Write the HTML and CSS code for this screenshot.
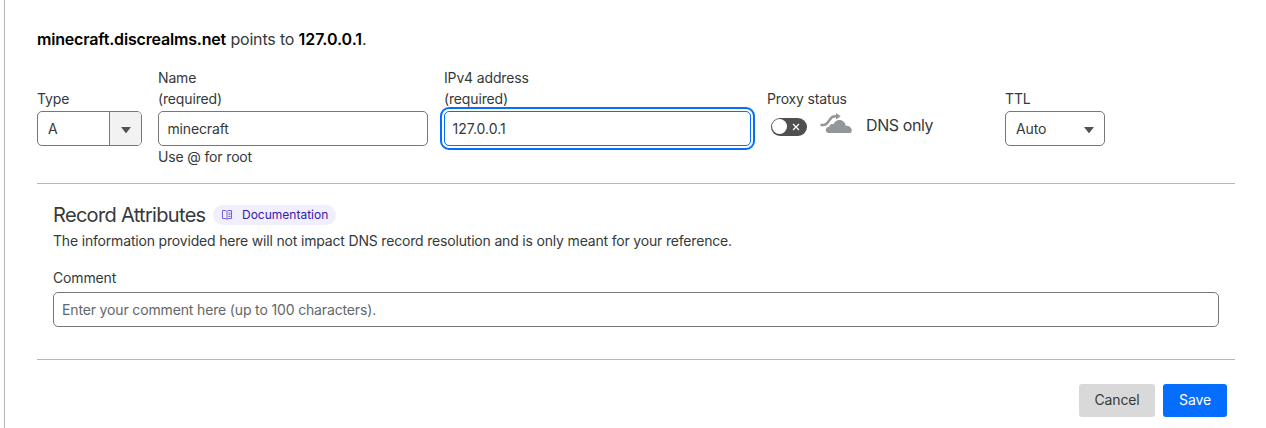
FILE: index.html
```html
<!DOCTYPE html>
<html lang="en">
<head>
<meta charset="utf-8">
<title>DNS record</title>
<link rel="stylesheet" href="styles.css">
</head>
<body>
<main class="panel">
  <p class="summary"><strong class="host">minecraft.discrealms.net</strong><span class="points"> points to </span><strong class="ip">127.0.0.1</strong>.</p>
  <section class="fields">
    <div class="field">
      <div class="label">Type</div>
      <div class="control type-select"><span class="type-value">A</span><span class="type-arrow"><svg class="caret" viewBox="0 0 10 6"><path d="M.6 0h8.8q.6 0 .2.6L5.5 5.700q-.5.5-1 0L.4.6Q0 0 .6 0Z"/></svg></span></div>
    </div>
    <div class="field">
      <div class="label">Name<br>(required)</div>
      <div class="control input">minecraft</div>
      <div class="help">Use @ for root</div>
    </div>
    <div class="field">
      <div class="label">IPv4 address<br>(required)</div>
      <div class="control input focused">127.0.0.1</div>
    </div>
    <div class="field proxy">
      <div class="label">Proxy status</div>
      <div class="proxy-row">
        <span class="toggle"><span class="knob"></span><svg class="cross" viewBox="0 0 8 8"><path d="M1 1l6 6M7 1L1 7"/></svg></span>
        <svg class="cloud" viewBox="0 0 32 21"><path d="M8.600 20C6.800 20 5.800 18.700 5.800 17.100c0-2 1.400-3.300 3.400-3.300.1-2.100 2.300-3.400 4.300-2.500C14.500 8.700 16.700 7 19.400 7c3.400 0 6 2.500 6.300 5.700 3.300-.1 6.100 1.700 6.100 4.900 0 1.500-.7 2.400-2 2.400Z"/><path class="route" d="M.5 12h3c3.200 0 4.300-2.400 6-5 1.400-2.300 2.900-3.700 5.800-3.700h2"/><path d="M16 0 20.700 3.200 16 6.400Z"/></svg>
        <span class="dns">DNS only</span>
      </div>
    </div>
    <div class="field">
      <div class="label">TTL</div>
      <div class="control ttl"><span>Auto</span><svg class="caret" viewBox="0 0 10 6"><path d="M.6 0h8.800q.6 0 .2.600L5.500 5.700q-.5.5-1 0L.4.6Q0 0 .6 0Z"/></svg></div>
    </div>
  </section>
  <section class="attributes">
    <div class="heading"><h2>Record Attributes</h2><a class="badge"><svg class="book" viewBox="0 0 12 10"><path d="M6 1.500 5 .5H1.500v8H5l1 1 1-1h3.500v-8H7L6 1.500v8M7.500 3h2M7.500 4.700h2M7.500 6.500h2"/></svg><span class="badge-text">Documentation</span></a></div>
    <p class="description">The information provided here will not impact DNS record resolution and is only meant for your reference.</p>
    <div class="comment-label">Comment</div>
    <div class="control input placeholder">Enter your comment here (up to 100 characters).</div>
  </section>
  <footer class="actions"><button class="button cancel">Cancel</button><button class="button save">Save</button></footer>
</main>
</body>
</html>
```
FILE: styles.css
```css
* { box-sizing: border-box; }
body { margin: 0; height: 428px; overflow: hidden; background: #fff; color: #36393a; font: 14px/21px Inter, sans-serif; letter-spacing: -.15px; white-space: nowrap; }
p, h2 { margin: 0; font-weight: 400; }
svg { display: block; flex: none; }
.panel { height: 428px; margin-left: 4px; padding: 27px 31px 0 32px; border-left: 1px solid #b6b7b8; }
.summary { height: 24px; font-size: 16px; line-height: 24px; white-space: pre; }
.summary strong { color: #000; font-weight: 600; }
.host, .points { letter-spacing: -.18px; }
.ip { letter-spacing: -.05px; }
.fields { display: grid; grid-template-columns: 105px 270px 307px 222px 100px; column-gap: 16px; height: 133px; padding-top: 16px; border-bottom: 1px solid #b6b7b8; }
.label { display: flex; flex-direction: column; justify-content: flex-end; height: 42px; margin-bottom: 2px; }
.control { display: flex; align-items: center; height: 35px; border: 1px solid #75777a; border-radius: 5px; background: #fff; }
.input { padding: 0 8.500px; }
.focused { padding-left: 7.500px; border-color: #056dff; outline: 2px solid #056dff; outline-offset: 2px; letter-spacing: 0; }
.help { height: 21px; }
.type-value { flex: 1; padding-left: 10px; }
.type-arrow { display: flex; align-items: center; justify-content: center; width: 32px; height: 100%; padding-top: 2px; border-left: 1px solid #75777a; border-radius: 0 4px 4px 0; background: #f2f2f2; }
.caret { width: 10px; height: 6px; fill: #505254; }
.ttl { justify-content: space-between; padding: 0 10px; }
.ttl .caret { margin-top: 2px; }
.proxy-row { display: flex; align-items: center; height: 30px; padding-left: 4px; }
.toggle { display: flex; align-items: center; justify-content: space-between; width: 36px; height: 18px; margin-top: 1px; padding: 0 7px 0 1px; border-radius: 9px; background: #4d4f50; }
.knob { width: 15px; height: 15px; border-radius: 50%; background: #fff; }
.cross { width: 8px; height: 8px; fill: none; stroke: #fff; stroke-width: 1.2; }
.cloud { width: 32px; height: 21px; margin: -6px 0 0 13px; fill: #92979b; }
.route { fill: none; stroke: #92979b; stroke-width: 2.5; }
.dns { margin: -2px 0 0 14px; font-size: 16px; letter-spacing: -.4px; }
.attributes { height: 176px; padding: 19px 16px 0; border-bottom: 1px solid #b6b7b8; }
.heading { display: flex; align-items: center; height: 25px; }
h2 { font-size: 20px; line-height: 25px; letter-spacing: -.68px; }
.badge { display: flex; align-items: center; gap: 9px; width: 123px; height: 20px; margin: -1px 0 0 7.500px; padding-left: 8px; border-radius: 10px; background: #f1effd; color: #3421ab; font-size: 12px; letter-spacing: 0; }
.badge-text { padding-bottom: 1px; }
.book { width: 12px; height: 10px; fill: none; stroke: #7464dc; stroke-width: 1; }
.description { height: 21px; margin-top: 2px; letter-spacing: -.18px; }
.comment-label { height: 21px; margin: 16px 0 4px; }
.placeholder { padding-left: 8px; color: #62676a; }
.actions { display: flex; justify-content: flex-end; gap: 8px; padding: 24px 8px 0; }
.button { height: 33px; padding: 0 0 2px; border: 0; border-radius: 3px; font: inherit; letter-spacing: -.15px; }
.cancel { width: 76px; color: #36393a; background: #d9d9d9; }
.save { width: 64px; color: #fff; background: #056dff; }
```
